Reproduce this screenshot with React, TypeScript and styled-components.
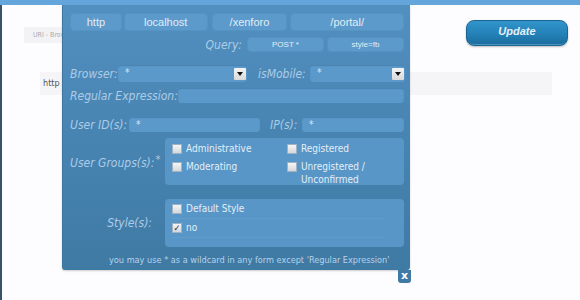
import React from "react";
import styled, { createGlobalStyle } from "styled-components";

const GlobalStyle = createGlobalStyle`
  html, body {
    margin: 0;
    padding: 0;
    background: #fdfdff;
    overflow: hidden;
  }
`;

const TopStrip = styled.div`
  height: 5px;
  background: #64a6db;
`;

const Stage = styled.div`
  position: relative;
  height: 295px;
  border-left: 2px solid #35536d;
  display: flex;
  flex-direction: column;
  font-family: "DejaVu Sans Condensed", "DejaVu Sans", sans-serif;
`;

const HeaderRow = styled.div`
  display: flex;
  justify-content: space-between;
  align-items: flex-start;
`;

const UriBox = styled.div`
  margin: 22px 0 0 22px;
  width: 120px;
  height: 16px;
  background: #f3f3f6;
  color: #a9a9b2;
  font-size: 7px;
  line-height: 16px;
  padding-left: 9px;
  box-sizing: border-box;
`;

const UpdateButton = styled.button`
  margin: 15px 12px 0 0;
  width: 102px;
  height: 26px;
  border-radius: 8px;
  border: 1px solid #1d6591;
  background: linear-gradient(to bottom, #3195cb 0%, #2381b7 55%, #1b6c9b 100%);
  box-shadow: inset 0 -6px 0 -5px rgba(120, 190, 230, 0.5), 0 1px 2px rgba(0, 0, 0, 0.25);
  color: #e6f0f8;
  font-family: "Liberation Sans", sans-serif;
  font-weight: bold;
  font-style: italic;
  font-size: 11px;
  padding: 0 0 4px;
`;

const UrlRow = styled.div`
  margin: 26px 0 0 38px;
  width: 512px;
  height: 23px;
  background: #f5f5f7;
  color: #555;
  font-size: 9px;
  line-height: 23px;
  padding-left: 3px;
  box-sizing: border-box;
`;

const Panel = styled.div`
  position: absolute;
  left: 60px;
  top: 0;
  width: 348px;
  height: 265px;
  box-sizing: border-box;
  padding: 8px 6px 0 7px;
  background: linear-gradient(to bottom, #5290c0 0%, #4985b3 45%, #3f7aa4 100%);
  border-left: 1px solid #3e76a0;
  border-radius: 0 0 3px 3px;
  box-shadow: 0 1px 2px rgba(0, 0, 0, 0.2);
  display: flex;
  flex-direction: column;
`;

const Row = styled.div<{ $top: number; $h?: number; $end?: boolean }>`
  display: flex;
  align-items: center;
  margin-top: ${(p) => p.$top}px;
  height: ${(p) => (p.$h ? `${p.$h}px` : "auto")};
  justify-content: ${(p) => (p.$end ? "flex-end" : "flex-start")};
`;

const PartButton = styled.div<{ $w: number; $gap?: number; $small?: boolean }>`
  width: ${(p) => p.$w}px;
  margin-left: ${(p) => p.$gap ?? 0}px;
  height: 100%;
  box-sizing: border-box;
  border-radius: 4px;
  background: #5b9acb;
  border: 1px solid #5593c3;
  color: #e2edf6;
  font-family: "Liberation Sans", sans-serif;
  font-size: ${(p) => (p.$small ? "8px" : "11px")};
  display: flex;
  align-items: center;
  justify-content: center;
`;

const Label = styled.span<{ $w?: number; $right?: boolean }>`
  color: #abcce7;
  font-style: italic;
  font-size: 12px;
  white-space: nowrap;
  width: ${(p) => (p.$w ? `${p.$w}px` : "auto")};
  text-align: ${(p) => (p.$right ? "right" : "left")};
  flex-shrink: 0;
`;

const Field = styled.div<{ $w?: number; $gap?: number }>`
  position: relative;
  width: ${(p) => (p.$w ? `${p.$w}px` : "auto")};
  flex: ${(p) => (p.$w ? "none" : "1")};
  margin-left: ${(p) => p.$gap ?? 0}px;
  height: 100%;
  box-sizing: border-box;
  border-radius: 3px;
  background: #5a99ca;
  box-shadow: inset 0 1px 1px rgba(40, 90, 130, 0.35);
  color: #d6e6f3;
  font-size: 10px;
  padding: 2px 0 0 7px;
`;

const DropArrow = styled.span`
  position: absolute;
  right: 1px;
  top: 50%;
  transform: translateY(-50%);
  width: 12px;
  height: 12px;
  border-radius: 1px;
  background: linear-gradient(to bottom, #f4f4f4, #d9d9d9);
  display: flex;
  align-items: center;
  justify-content: center;
  &::after {
    content: "";
    border-left: 3px solid transparent;
    border-right: 3px solid transparent;
    border-top: 4px solid #111;
    margin-top: 1px;
  }
`;

const Star = styled.sup`
  font-style: normal;
  font-size: 11px;
  vertical-align: 4px;
  margin-left: 1px;
`;

const GroupBox = styled.div<{ $h: number }>`
  margin-left: auto;
  width: 239px;
  height: ${(p) => p.$h}px;
  box-sizing: border-box;
  border-radius: 4px;
  background: #5796c7;
  padding: 4px 0 0 7px;
  display: grid;
  grid-template-columns: 115px 1fr;
  align-content: start;
  row-gap: 5px;
`;

const StyleBox = styled(GroupBox)`
  grid-template-columns: 1fr;
  row-gap: 0;
  padding-top: 1px;
`;

const Check = styled.label<{ $line?: boolean }>`
  display: flex;
  align-items: flex-start;
  gap: 4px;
  color: #e4eef7;
  font-size: 10px;
  line-height: 13px;
  ${(p) =>
    p.$line &&
    `
    padding: 2px 0 3px;
    border-bottom: 1px solid rgba(120, 175, 215, 0.3);
    margin-right: 20px;
  `}
`;

const Box = styled.span<{ $on?: boolean }>`
  flex: none;
  width: 8px;
  height: 8px;
  margin-top: 2px;
  border: 1px solid #9fb3c4;
  background: linear-gradient(to bottom, #f5f5f5, #d4d8dc);
  color: #1d2b3a;
  font-size: 9px;
  line-height: 8px;
  text-align: center;
  font-weight: bold;
`;

const Footer = styled.div`
  margin-top: 8px;
  padding-left: 39px;
  color: #b5d2ea;
  font-size: 9.1px;
  white-space: nowrap;
`;

const CloseTab = styled.div`
  position: absolute;
  right: -1px;
  bottom: -13px;
  width: 13px;
  height: 13px;
  background: #3f7aa4;
  border-radius: 0 0 3px 3px;
  color: #fff;
  font-family: "DejaVu Sans", sans-serif;
  font-weight: bold;
  font-size: 11px;
  line-height: 12px;
  text-align: center;
`;

export default function App() {
  return (
    <>
      <GlobalStyle />
      <TopStrip />
      <Stage>
        <HeaderRow>
          <UriBox>URI - Browser</UriBox>
          <UpdateButton>Update</UpdateButton>
        </HeaderRow>
        <UrlRow>http</UrlRow>

        <Panel>
          <Row $top={0} $h={18}>
            <PartButton $w={52}>http</PartButton>
            <PartButton $w={84} $gap={2}>localhost</PartButton>
            <PartButton $w={76} $gap={4}>/xenforo</PartButton>
            <PartButton $w={114} $gap={3}>/portal/</PartButton>
          </Row>
          <Row $top={6} $h={15} $end>
            <Label style={{ marginRight: 5 }}>Query:</Label>
            <PartButton $w={77} $small>POST *</PartButton>
            <PartButton $w={77} $gap={3} $small>style=fb</PartButton>
          </Row>
          <Row $top={13} $h={17}>
            <Label $w={48}>Browser:</Label>
            <Field $w={129}>
              *<DropArrow />
            </Field>
            <Label $w={52} style={{ marginLeft: 11 }}>isMobile:</Label>
            <Field $w={95}>
              *<DropArrow />
            </Field>
          </Row>
          <Row $top={6} $h={15}>
            <Label $w={108}>Regular Expression:</Label>
            <Field />
          </Row>
          <Row $top={14} $h={15}>
            <Label $w={59}>User ID(s):</Label>
            <Field $w={131}>*</Field>
            <Label $w={32} style={{ marginLeft: 10 }}>IP(s):</Label>
            <Field>*</Field>
          </Row>
          <Row $top={6}>
            <Label>
              User Groups(s):<Star>*</Star>
            </Label>
            <GroupBox $h={47}>
              <Check>
                <Box />
                Administrative
              </Check>
              <Check>
                <Box />
                Registered
              </Check>
              <Check>
                <Box />
                Moderating
              </Check>
              <Check>
                <Box />
                Unregistered /<br />
                Unconfirmed
              </Check>
            </GroupBox>
          </Row>
          <Row $top={14}>
            <Label $w={82} $right>
              Style(s):
            </Label>
            <StyleBox $h={48}>
              <Check $line>
                <Box />
                Default Style
              </Check>
              <Check $line>
                <Box $on>✓</Box>
                no
              </Check>
            </StyleBox>
          </Row>
          <Footer>you may use * as a wildcard in any form except 'Regular Expression'</Footer>
          <CloseTab>x</CloseTab>
        </Panel>
      </Stage>
    </>
  );
}
